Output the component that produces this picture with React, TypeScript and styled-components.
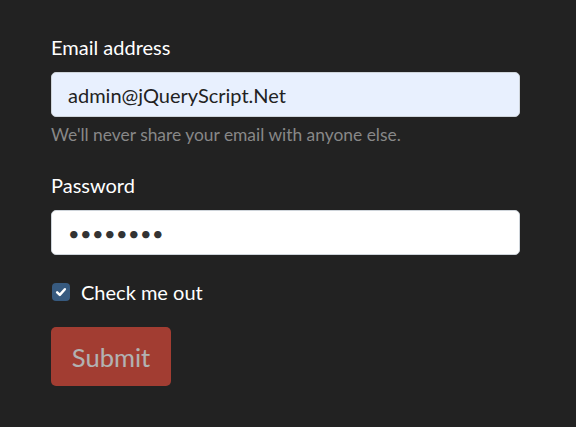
import styled, { createGlobalStyle } from "styled-components";

const GlobalStyle = createGlobalStyle`
    body {
        margin: 0;
        background-color: #222222;
        font-family: Lato, "Liberation Sans", sans-serif;
        color: #ffffff;
    }
`
const Form = styled.form`
    padding: 32px 56px 0 51px;
    width: 469px;
`
const Group = styled.div`
    margin-bottom: 22px;
`
const Label = styled.label`
    display: block;
    font-size: 20px;
    line-height: 30px;
    margin-bottom: 10px;
`
const Input = styled.input`
    display: block;
    box-sizing: border-box;
    width: 100%;
    height: 45px;
    padding: 0 16px;
    border: 1px solid #ced4da;
    border-radius: 5px;
    font-family: inherit;
    font-size: 20px;
    color: #222222;
    background-color: ${(p) => (p.$filled ? "#e8f0fe" : "#ffffff")};
    outline: none;
    &[type="password"] {
        letter-spacing: 0.4px;
        color: #333333;
    }
`
const Help = styled.div`
    margin-top: 5px;
    font-size: 17.4px;
    line-height: 26px;
    color: #888888;
`
const CheckRow = styled.label`
    display: flex;
    align-items: center;
    gap: 11px;
    font-size: 20px;
    line-height: 30px;
`
const Box = styled.span`
    width: 18px;
    height: 18px;
    margin-left: 1px;
    border-radius: 4px;
    background-color: #375a7f;
    display: flex;
    align-items: center;
    justify-content: center;
`
const Submit = styled.button`
    margin-top: 20px;
    width: 120px;
    height: 59px;
    border: none;
    border-radius: 5px;
    background-color: #e74c3c;
    color: #ffffff;
    font-family: inherit;
    font-size: 25.5px;
    opacity: 0.65;
`

function App() {
    return (
        <>
            <GlobalStyle />
            <Form>
                <Group>
                    <Label>Email address</Label>
                    <Input $filled type="email" defaultValue="admin@jQueryScript.Net" />
                    <Help>We'll never share your email with anyone else.</Help>
                </Group>
                <Group>
                    <Label>Password</Label>
                    <Input type="password" defaultValue="password" />
                </Group>
                <CheckRow>
                    <Box>
                        <svg width="14" height="14" viewBox="0 0 20 20">
                            <path d="M4.5 10.5l3.8 3.6 7.2-8" fill="none" stroke="#fff" strokeWidth="3.6" strokeLinecap="round" strokeLinejoin="round" />
                        </svg>
                    </Box>
                    Check me out
                </CheckRow>
                <Submit type="button" disabled>Submit</Submit>
            </Form>
        </>
    );
}

export default App;
